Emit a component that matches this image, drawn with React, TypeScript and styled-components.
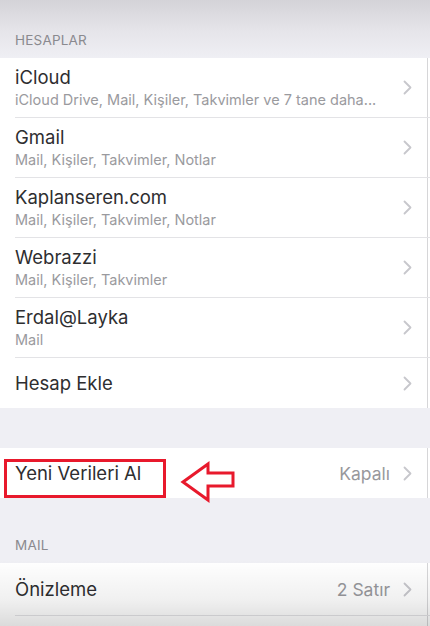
import React from "react";
import styled, { createGlobalStyle } from "styled-components";

const GlobalStyle = createGlobalStyle`
  html, body {
    margin: 0;
    padding: 0;
    background: #efeff4;
  }
  body {
    font-family: Inter, "Noto Sans", "Liberation Sans", sans-serif;
    -webkit-font-smoothing: antialiased;
  }
`;

const Screen = styled.div`
  position: relative;
  width: 430px;
  height: 626px;
  overflow: hidden;
  background: #efeff4;
  display: flex;
  flex-direction: column;
`;

const SectionHeader = styled.div<{ $height: number; $shade?: boolean }>`
  height: ${(p) => p.$height}px;
  flex-shrink: 0;
  box-sizing: border-box;
  display: flex;
  align-items: flex-end;
  padding: 0 0 10px 15px;
  font-size: 13.5px;
  color: #8a8a8f;
  letter-spacing: 0.2px;
  background: ${(p) =>
    p.$shade ? "linear-gradient(#d4d3d8 0%, #e6e5ea 55%, #efeff4 100%)" : "#efeff4"};
`;

const Spacer = styled.div<{ $height: number }>`
  height: ${(p) => p.$height}px;
  flex-shrink: 0;
`;

const Group = styled.div`
  background: #fff;
  box-shadow: inset -2px 0 0 #fff, inset -3px 0 0 #d6d6d8;
  flex-shrink: 0;
`;

const Row = styled.div<{ $height: number }>`
  position: relative;
  height: ${(p) => p.$height}px;
  padding-left: 15px;
  display: flex;
`;

const RowInner = styled.div<{ $last?: boolean }>`
  flex: 1;
  display: flex;
  align-items: center;
  padding-right: 18px;
  border-bottom: ${(p) => (p.$last ? "none" : "1px solid #e3e3e6")};
`;

const Texts = styled.div`
  flex: 1;
  display: flex;
  flex-direction: column;
  min-width: 0;
`;

const Title = styled.div`
  font-size: 18.5px;
  color: #2e2e30;
  line-height: 22px;
`;

const Subtitle = styled.div`
  font-size: 14.5px;
  color: #9a9a9e;
  line-height: 18px;
  margin-top: 3px;
  white-space: nowrap;
`;

const Value = styled.span`
  font-size: 17.5px;
  color: #98989c;
  margin-right: 13px;
`;

const Chevron = () => (
  <svg width="9" height="15" viewBox="0 0 9 15">
    <path
      d="M1.5 1.5 L7.5 7.5 L1.5 13.5"
      fill="none"
      stroke="#c7c7cc"
      strokeWidth="1.8"
      strokeLinecap="round"
      strokeLinejoin="round"
    />
  </svg>
);

const Highlight = styled.div`
  position: absolute;
  left: 4px;
  top: 11px;
  width: 162px;
  height: 39px;
  box-sizing: border-box;
  border: 3px solid #e8192c;
  pointer-events: none;
`;

const ArrowMark = styled.svg`
  position: absolute;
  left: 180px;
  top: 13px;
  overflow: visible;
`;

const Vignette = styled.div`
  position: absolute;
  left: 0;
  right: 0;
  bottom: 0;
  height: 66px;
  background: linear-gradient(rgba(0, 0, 0, 0) 0%, rgba(0, 0, 0, 0.06) 60%, rgba(0, 0, 0, 0.14) 100%);
  pointer-events: none;
`;

type Account = { name: string; detail: string };

const accounts: Account[] = [
  { name: "iCloud", detail: "iCloud Drive, Mail, Kişiler, Takvimler ve 7 tane daha..." },
  { name: "Gmail", detail: "Mail, Kişiler, Takvimler, Notlar" },
  { name: "Kaplanseren.com", detail: "Mail, Kişiler, Takvimler, Notlar" },
  { name: "Webrazzi", detail: "Mail, Kişiler, Takvimler" },
  { name: "Erdal@Layka", detail: "Mail" },
];

export default function App() {
  return (
    <>
      <GlobalStyle />
      <Screen>
        <SectionHeader $height={58} $shade>
          HESAPLAR
        </SectionHeader>
        <Group>
          {accounts.map((a) => (
            <Row key={a.name} $height={60}>
              <RowInner>
                <Texts>
                  <Title>{a.name}</Title>
                  <Subtitle>{a.detail}</Subtitle>
                </Texts>
                <Chevron />
              </RowInner>
            </Row>
          ))}
          <Row $height={50}>
            <RowInner $last>
              <Texts>
                <Title>Hesap Ekle</Title>
              </Texts>
              <Chevron />
            </RowInner>
          </Row>
        </Group>
        <Spacer $height={40} />
        <Group>
          <Row $height={50}>
            <RowInner $last>
              <Texts>
                <Title>Yeni Verileri Al</Title>
              </Texts>
              <Value>Kapalı</Value>
              <Chevron />
            </RowInner>
            <Highlight />
            <ArrowMark width="56" height="40" viewBox="0 0 56 40">
              <polygon
                points="3,21 28,3 28,12 53,12 53,25 28,25 28,39"
                fill="#fff"
                stroke="#e8192c"
                strokeWidth="3"
                strokeLinejoin="miter"
              />
            </ArrowMark>
          </Row>
        </Group>
        <SectionHeader $height={65}>MAIL</SectionHeader>
        <Group>
          <Row $height={53}>
            <RowInner>
              <Texts>
                <Title>Önizleme</Title>
              </Texts>
              <Value>2 Satır</Value>
              <Chevron />
            </RowInner>
          </Row>
          <Row $height={50}>
            <RowInner $last />
          </Row>
        </Group>
        <Vignette />
      </Screen>
    </>
  );
}
